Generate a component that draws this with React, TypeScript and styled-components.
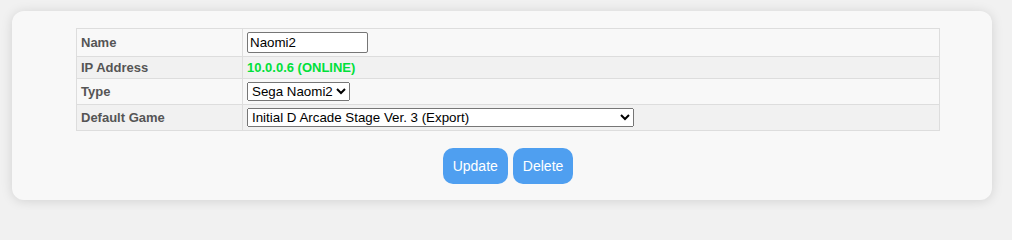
import React, { useState } from "react";
import styled, { createGlobalStyle } from "styled-components";

const GlobalStyle = createGlobalStyle`
  body {
    margin: 0;
    background: #f1f1f1;
    font-family: "Liberation Sans", Arial, sans-serif;
  }
`;

const games = [
  "Initial D Arcade Stage Ver. 3 (Export)",
  "Initial D Arcade Stage Ver. 2 (Export)",
  "Initial D Arcade Stage (Export)",
];

export default function App() {
  const [name, setName] = useState("Naomi2");
  const [type, setType] = useState("naomi2");
  const [game, setGame] = useState(games[0]);

  return (
    <>
      <GlobalStyle />
      <Card>
        <Table>
          <tbody>
            <Row $alt={false}>
              <Label>Name</Label>
              <Value>
                <TextInput value={name} onChange={(e) => setName(e.target.value)} />
              </Value>
            </Row>
            <Row $alt>
              <Label>IP Address</Label>
              <Value>
                <Online>10.0.0.6 (ONLINE)</Online>
              </Value>
            </Row>
            <Row $alt={false}>
              <Label>Type</Label>
              <Value>
                <Select value={type} onChange={(e) => setType(e.target.value)}>
                  <option value="naomi">Sega Naomi</option>
                  <option value="naomi2">Sega Naomi2</option>
                </Select>
              </Value>
            </Row>
            <Row $alt>
              <Label>Default Game</Label>
              <Value>
                <Select $wide value={game} onChange={(e) => setGame(e.target.value)}>
                  {games.map((g) => (
                    <option key={g}>{g}</option>
                  ))}
                </Select>
              </Value>
            </Row>
          </tbody>
        </Table>
        <Buttons>
          <Button>Update</Button>
          <Button>Delete</Button>
        </Buttons>
      </Card>
    </>
  );
}

const Card = styled.div`
  margin: 11px 20px 10px 12px;
  padding: 17px 0 16px 64px;
  background: #f8f8f8;
  border-radius: 12px;
  box-shadow: 0 1px 12px rgba(0, 0, 0, 0.13);
`;

const Table = styled.table`
  width: 864px;
  border-collapse: collapse;
  font-size: 13px;
`;

const Row = styled.tr<{ $alt: boolean }>`
  background: ${(p) => (p.$alt ? "#f1f1f1" : "#f8f8f8")};
`;

const Label = styled.td`
  width: 157px;
  padding: 3px 4px;
  border: 1px solid #dddddd;
  font-weight: bold;
  color: #555555;
`;

const Value = styled.td`
  padding: 3px 4px;
  border: 1px solid #dddddd;
  color: #000;
`;

const Online = styled.span`
  color: #00e03a;
  font-weight: bold;
`;

const TextInput = styled.input`
  box-sizing: border-box;
  width: 121px;
  height: 21px;
  padding: 1px 2px;
  font-family: "Liberation Sans", Arial, sans-serif;
  font-size: 13.33px;
  border: 1px solid #767676;
  border-radius: 2px;
  vertical-align: middle;
`;

const Select = styled.select<{ $wide?: boolean }>`
  ${(p) => (p.$wide ? "width: 387px;" : "")}
  height: 19px;
  font-family: "Liberation Sans", Arial, sans-serif;
  font-size: 13.33px;
  vertical-align: middle;
`;

const Buttons = styled.div`
  width: 864px;
  display: flex;
  justify-content: center;
  gap: 5px;
  margin-top: 17px;
`;

const Button = styled.button`
  height: 36px;
  padding: 0 10px;
  border: none;
  border-radius: 10px;
  background: #4f9ff0;
  color: #fff;
  font-family: "Liberation Sans", Arial, sans-serif;
  font-size: 14px;
  cursor: pointer;
`;
